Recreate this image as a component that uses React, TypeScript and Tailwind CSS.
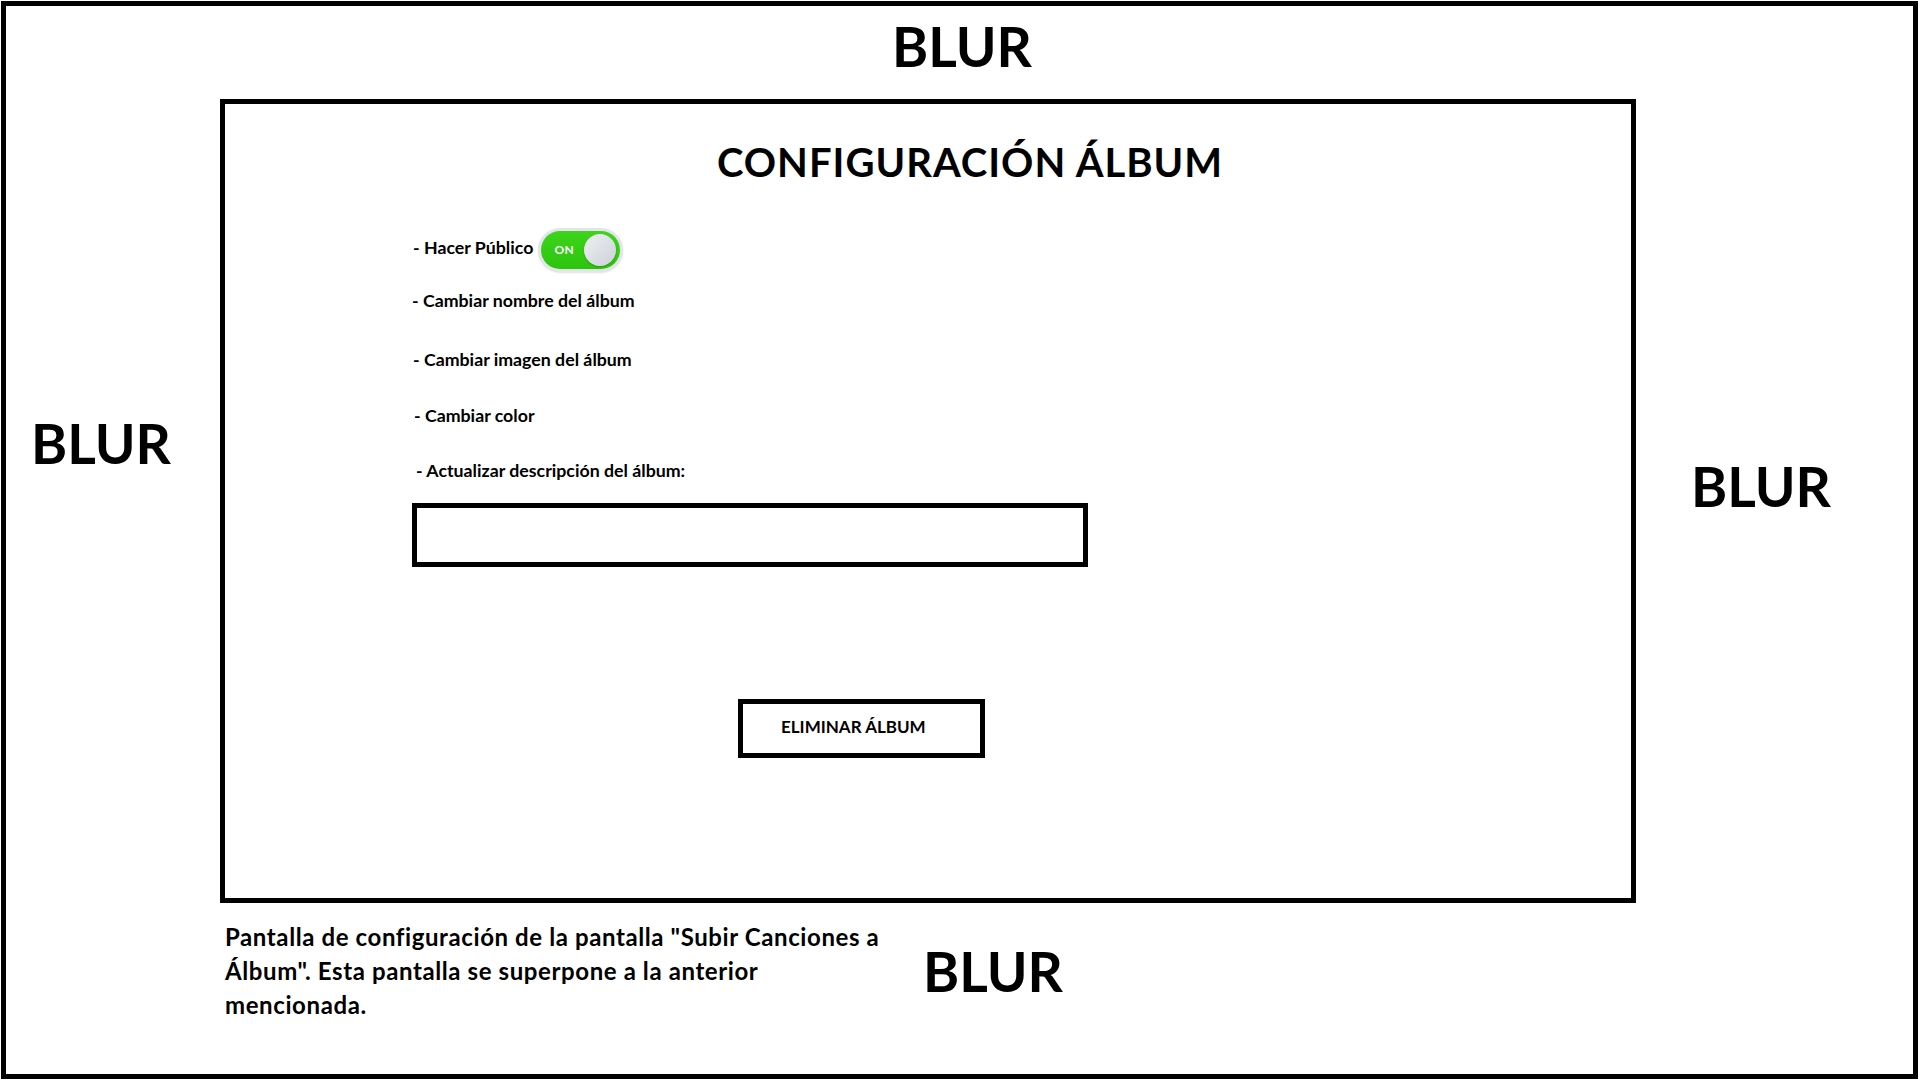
import React from 'react';

const Blur: React.FC<{ className?: string }> = ({ className = '' }) => (
  <div className={`text-[55px] leading-[1.2] font-bold ${className}`}>BLUR</div>
);

const Toggle: React.FC = () => (
  <div className="w-[85px] h-[44px] rounded-full bg-[#e3e5e9] p-[3px] shadow-[0_1px_2px_rgba(0,0,0,0.12)]">
    <div className="h-full w-full rounded-full bg-linear-to-b from-[#3dd41b] to-[#2cc40c] flex items-center justify-between pl-[13px] pr-[4px]">
      <span className="text-white text-[12px] font-bold tracking-[0.5px]">ON</span>
      <div className="w-[32px] h-[32px] rounded-full bg-linear-to-br from-[#eef0f3] to-[#cdd1d8] shadow-[0_1px_2px_rgba(0,0,0,0.2)]" />
    </div>
  </div>
);

const Item: React.FC<{ className?: string; children: React.ReactNode }> = ({ className = '', children }) => (
  <div className={`text-[17.75px] leading-[1.2] font-bold ${className}`}>{children}</div>
);

const App: React.FC = () => {
  return (
    <div className="w-[1920px] h-[1080px] bg-white p-[1px] text-black font-['Lato','Liberation_Sans',sans-serif] overflow-hidden">
      <div className="w-[1917px] h-[1078px] border-[5px] border-black flex flex-col">
        {/* top */}
        <div className="h-[93px] pt-[7px] pl-[886px]">
          <Blur />
        </div>

        {/* middle */}
        <div className="flex h-[804px]">
          <div className="w-[214px] pl-[25px] pt-[311px]">
            <Blur />
          </div>

          <div className="w-[1416px] border-[5px] border-black flex flex-col">
            <h1 className="mt-[34px] pl-[84px] text-center text-[40px] leading-[1.2] tracking-[1px] font-bold">CONFIGURACIÓN ÁLBUM</h1>

            <div className="mt-[42px] pl-[187px] flex flex-col items-start">
              <div className="h-[44px] flex items-center gap-[5px]">
                <Item className="ml-[1px] mb-[4px]">- Hacer Público</Item>
                <Toggle />
              </div>
              <Item className="mt-[18px]">- Cambiar nombre del álbum</Item>
              <Item className="mt-[38px] ml-[1px]">- Cambiar imagen del álbum</Item>
              <Item className="mt-[34px] ml-[2px]">- Cambiar color</Item>
              <Item className="mt-[34px] ml-[4px]">- Actualizar descripción del álbum:</Item>

              <div className="mt-[22px] w-[676px] h-[64px] border-[5px] border-black" />

              <button className="mt-[132px] ml-[326px] w-[247px] h-[59px] border-[5px] border-black flex items-center pl-[38px] pb-[2px] text-[17px] leading-[1.2] font-bold">
                ELIMINAR ÁLBUM
              </button>
            </div>
          </div>

          <div className="flex-1 pl-[55px] pt-[354px]">
            <Blur />
          </div>
        </div>

        {/* bottom */}
        <div className="flex">
          <div className="w-[219px]" />
          <p className="w-[698px] pt-[17px] text-[24px] leading-[34px] tracking-[0.6px] font-bold">
            Pantalla de configuración de la pantalla "Subir Canciones a
            <br />
            Álbum". Esta pantalla se superpone a la anterior
            <br />
            mencionada.
          </p>
          <div className="pt-[35px]">
            <Blur />
          </div>
        </div>
      </div>
    </div>
  );
};

export default App;
